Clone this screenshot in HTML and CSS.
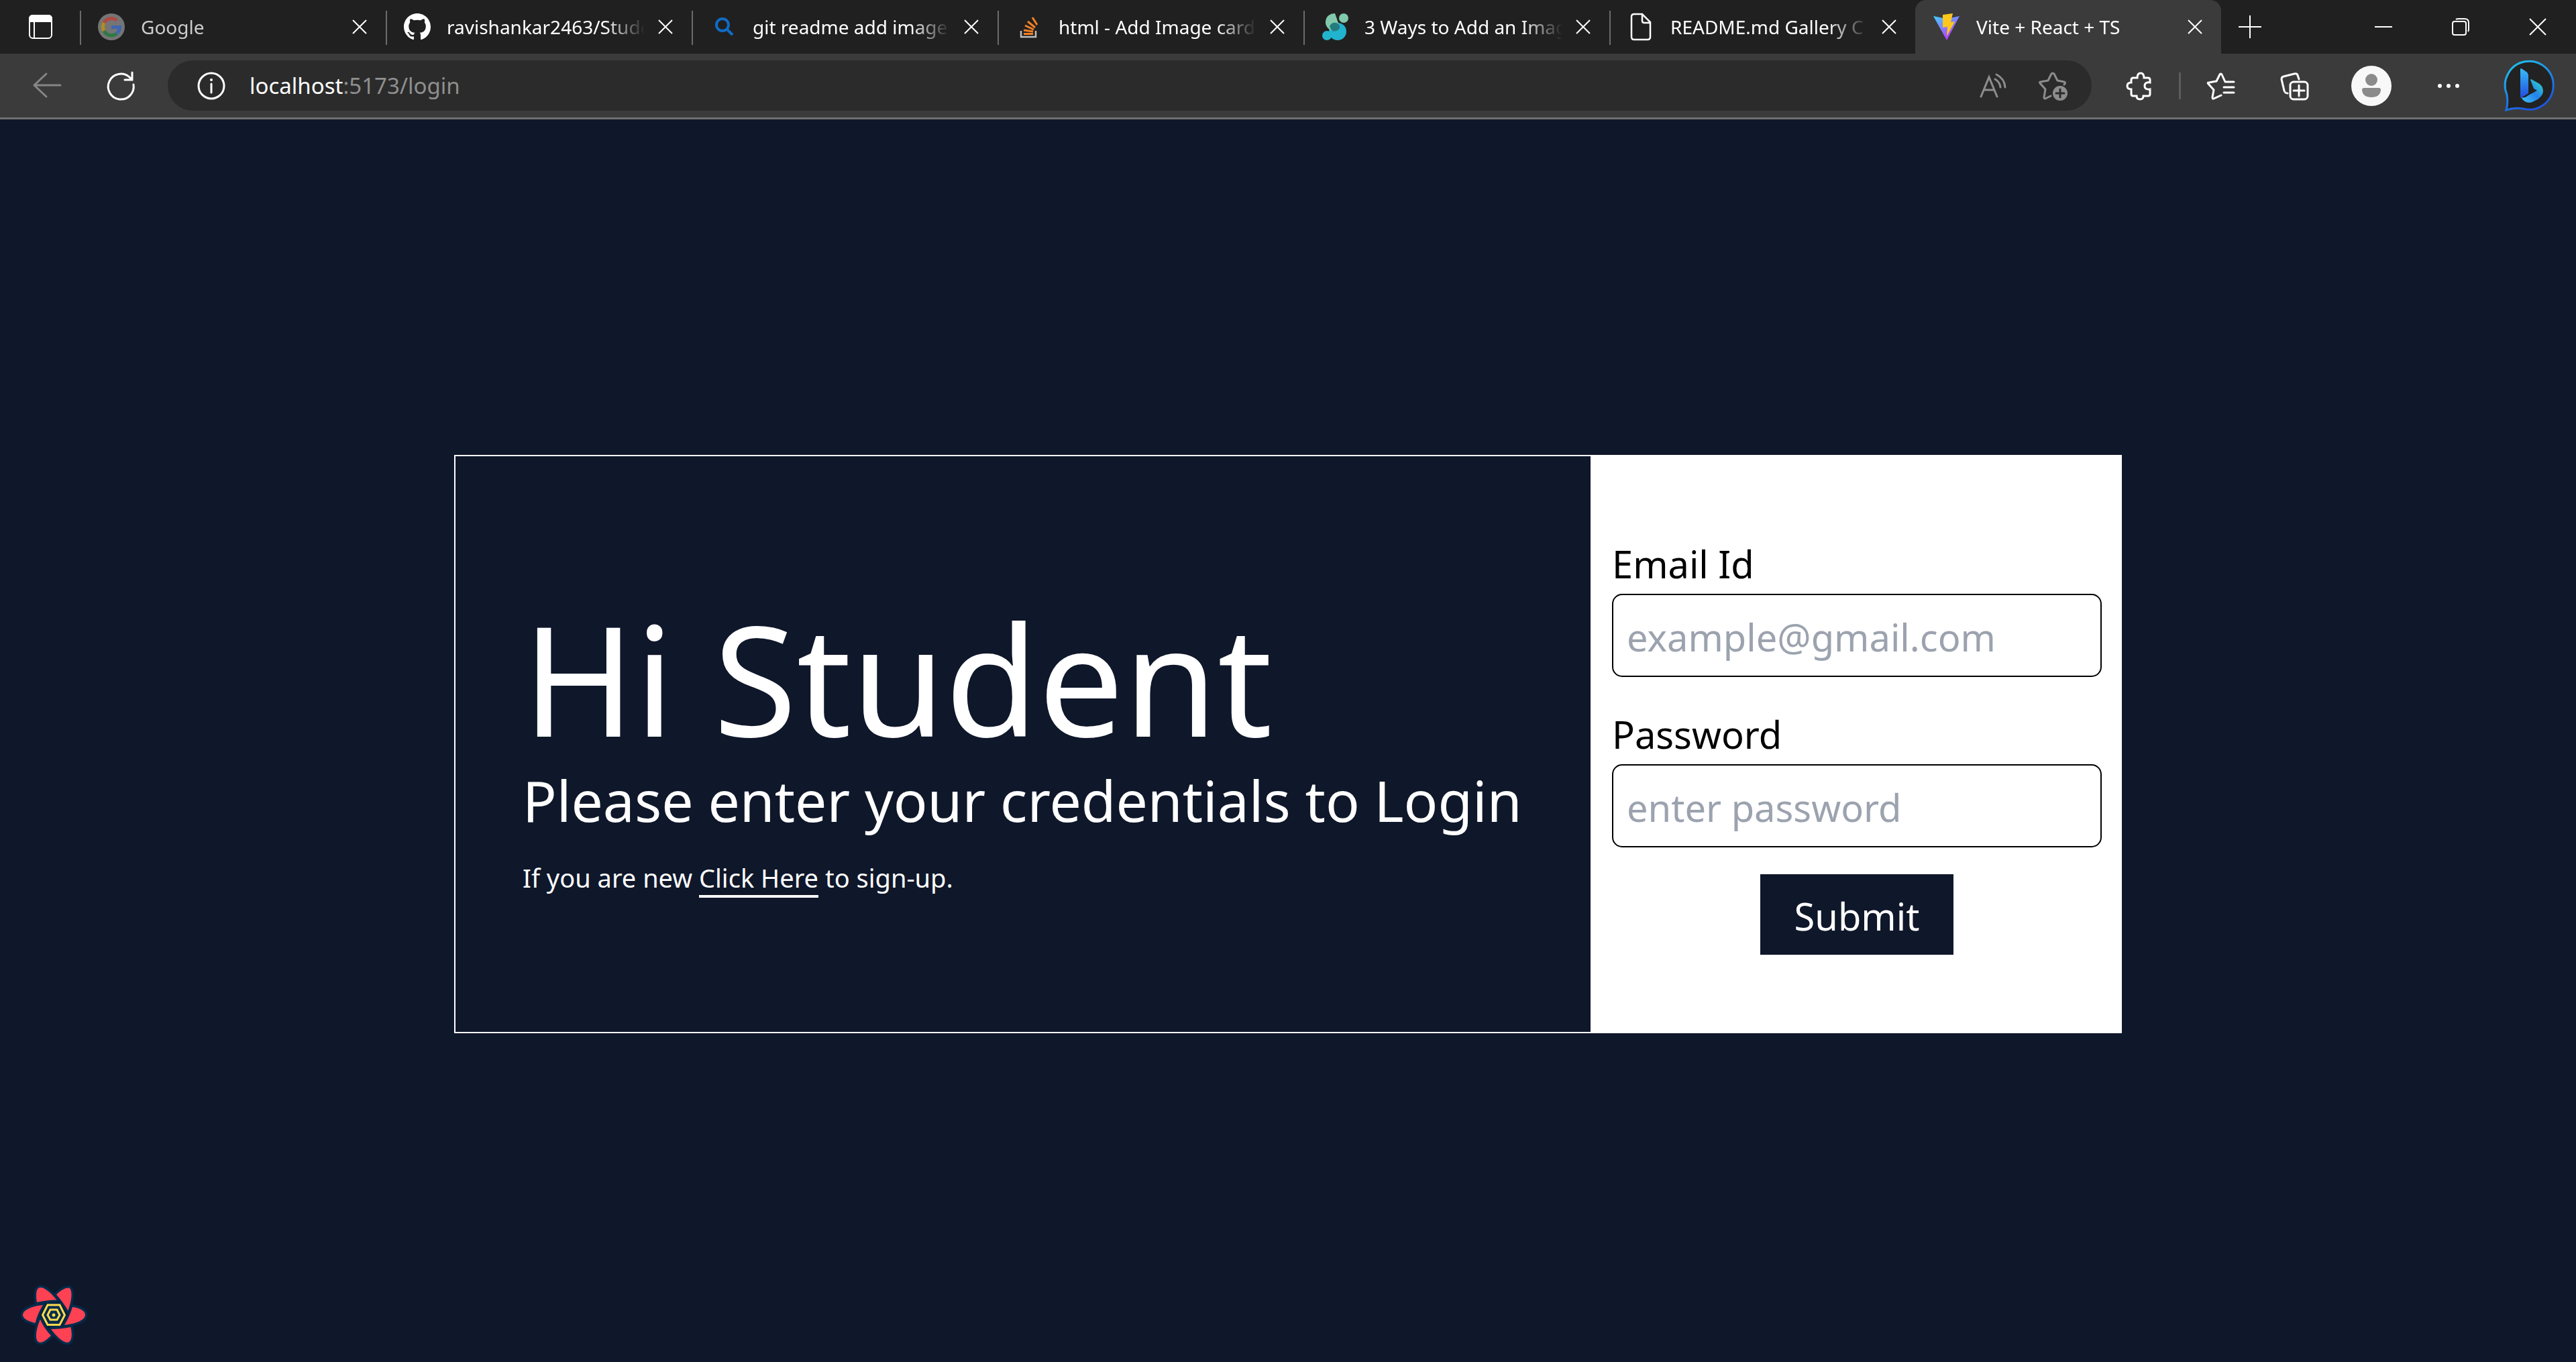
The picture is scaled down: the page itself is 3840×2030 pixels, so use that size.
FILE: index.html
```html
<!DOCTYPE html>
<html lang="en">
<head>
<meta charset="utf-8">
<title>Vite + React + TS</title>
<link rel="stylesheet" href="styles.css">
</head>
<body>
<header class="browser">
  <div class="tabstrip">
    <button class="tab-actions" aria-label="Tab actions"><svg width="40" height="76" viewBox="0 0 40 76"><rect x="4" y="23" width="33" height="34" rx="5" fill="none" stroke="#fff" stroke-width="2"/><path d="M4 32v-4q0-5 5-5h23q5 0 5 5v4zM11 32v25" fill="#fff" stroke="#fff" stroke-width="2"/></svg></button>
    <div class="tab">
      <svg class="fav" viewBox="0 0 40 40"><circle cx="20" cy="20" r="20" fill="#757575"/><g fill="none" stroke-width="5"><path d="M9 14A12.500 12.500 0 0 1 28 10.500" stroke="#b04a44"/><path d="M9 26A12.500 12.500 0 0 1 9 14" stroke="#b08c20"/><path d="M28 30A12.500 12.500 0 0 1 9 26" stroke="#2f7a45"/><path d="M20 20.500H32.500Q32.500 26 28 30" stroke="#3f66b0"/></g></svg>
      <span class="tab-title tab-title-dim">Google</span>
      <button class="close" aria-label="Close tab"><svg viewBox="0 0 22 22"><path d="M1 1L21 21M21 1L1 21"/></svg></button>
    </div>
    <div class="tab">
      <svg class="fav" viewBox="0 0 16 16"><path fill="#fff" d="M8 0C3.580 0 0 3.580 0 8c0 3.540 2.290 6.530 5.470 7.590.4.070.55-.170.55-.380 0-.190-.010-.820-.010-1.490-2.010.370-2.530-.490-2.690-.940-.090-.230-.480-.940-.820-1.130-.280-.150-.680-.520-.010-.530.630-.010 1.080.580 1.230.820.720 1.210 1.870.870 2.330.660.070-.520.280-.870.510-1.070-1.780-.2-3.640-.890-3.640-3.950 0-.870.310-1.590.820-2.150-.080-.2-.360-1.020.080-2.120 0 0 .670-.210 2.200.820.640-.180 1.320-.270 2-.270s1.360.090 2 .270c1.530-1.040 2.200-.820 2.200-.820.440 1.100.160 1.920.080 2.120.510.560.820 1.270.820 2.150 0 3.070-1.870 3.750-3.650 3.950.290.250.540.730.540 1.480 0 1.070-.010 1.930-.010 2.200 0 .210.150.460.550.380A8.010 8.010 0 0 0 16 8c0-4.420-3.580-8-8-8z"/></svg>
      <span class="tab-title">ravishankar2463/Stude</span>
      <button class="close" aria-label="Close tab"><svg viewBox="0 0 22 22"><path d="M1 1L21 21M21 1L1 21"/></svg></button>
    </div>
    <div class="tab">
      <svg class="fav" viewBox="0 0 40 40"><g fill="none" stroke="#0f6cc4" stroke-width="4"><circle cx="19" cy="17" r="9"/><path d="M25 23L34 32"/></g></svg>
      <span class="tab-title">git readme add image</span>
      <button class="close" aria-label="Close tab"><svg viewBox="0 0 22 22"><path d="M1 1L21 21M21 1L1 21"/></svg></button>
    </div>
    <div class="tab">
      <svg class="fav" viewBox="0 0 40 40"><path d="M8 26v9h22v-9" fill="none" stroke="#bcbec0" stroke-width="2.500"/><g stroke="#f48024" stroke-width="3" fill="none"><path d="M12 30.500h14M12 25l14 2M14 18l13 6M18 12l11 9M25 6l7 11"/></g></svg>
      <span class="tab-title">html - Add Image card</span>
      <button class="close" aria-label="Close tab"><svg viewBox="0 0 22 22"><path d="M1 1L21 21M21 1L1 21"/></svg></button>
    </div>
    <div class="tab">
      <svg class="fav" viewBox="0 0 40 40"><circle cx="24" cy="27" r="13" fill="#22b3cf"/><path d="M20 0A13 13 0 1 0 18 26Q28 26 26 17Z" fill="#82c9ac"/><path d="M12 19Q15 13 22 14Q28 16 27 22Q23 28 16 26Q13 23 12 19Z" fill="#247c7e"/><circle cx="33" cy="7" r="7" fill="#82c9ac"/><circle cx="8" cy="33" r="7" fill="#22b3cf"/></svg>
      <span class="tab-title">3 Ways to Add an Imag</span>
      <button class="close" aria-label="Close tab"><svg viewBox="0 0 22 22"><path d="M1 1L21 21M21 1L1 21"/></svg></button>
    </div>
    <div class="tab">
      <svg class="fav" viewBox="0 0 40 40"><path d="M10 1h12l12 12v22q0 4-4 4H10q-4 0-4-4V5q0-4 4-4zM22 1v10q0 3 3 3h9" fill="none" stroke="#fff" stroke-width="2.500"/></svg>
      <span class="tab-title">README.md Gallery C</span>
      <button class="close" aria-label="Close tab"><svg viewBox="0 0 22 22"><path d="M1 1L21 21M21 1L1 21"/></svg></button>
    </div>
    <div class="tab active">
      <svg class="fav" viewBox="0 0 40 40"><defs><linearGradient id="vite" x1="0" y1="0" x2=".6" y2="1"><stop stop-color="#41d1ff"/><stop offset="1" stop-color="#bd34fe"/></linearGradient></defs><path d="M0 4L20 8L39 4L20 40Z" fill="url(#vite)"/><path d="M14 2L29 0L26 13L32 12L20 34L21 20L14 21Z" fill="#ffc61c"/></svg>
      <span class="tab-title">Vite + React + TS</span>
      <button class="close" aria-label="Close tab"><svg viewBox="0 0 22 22"><path d="M1 1L21 21M21 1L1 21"/></svg></button>
    </div>
    <button class="newtab" aria-label="New tab"><svg width="36" height="36" viewBox="0 0 36 36"><path d="M1 18H35M18 1V35"/></svg></button>
    <div class="window-controls">
      <button aria-label="Minimize"><svg width="26" height="26" viewBox="0 0 26 26"><path d="M0 13H26"/></svg></button>
      <button aria-label="Restore"><svg width="26" height="26" viewBox="0 0 26 26"><rect x="1" y="5" width="20" height="20" rx="3"/><path d="M6 2Q7 1 10 1H19Q25 1 25 7V16Q25 19 24 20"/></svg></button>
      <button aria-label="Close"><svg width="26" height="26" viewBox="0 0 26 26"><path d="M1 1L25 25M25 1L1 25"/></svg></button>
    </div>
  </div>
  <div class="toolbar">
    <button class="tool back" aria-label="Back"><svg width="42" height="42" viewBox="0 0 42 42"><path d="M41 20H2M20 3L2 20L20 37"/></svg></button>
    <button class="tool reload" aria-label="Reload"><svg width="42" height="42" viewBox="0 0 42 42"><path d="M40 19A19 19 0 1 1 34 8L38 12M38 1V12H27"/></svg></button>
    <div class="omnibox">
      <svg class="info" width="42" height="42" viewBox="0 0 42 42"><circle cx="21" cy="21" r="19"/><path d="M21 18V31"/><circle class="dot" cx="21" cy="12" r="2"/></svg>
      <span class="url"><span class="host">localhost</span>:5173/login</span>
      <button class="tool dim read" aria-label="Read aloud"><svg width="42" height="42" viewBox="0 0 42 42"><path d="M3 37L15 8L27 37M8 27H22M24 11Q31 15 32 23M26 4Q38 10 39 23"/></svg></button>
      <button class="tool dim" aria-label="Add to favorites"><svg width="44" height="44" viewBox="0 0 44 44"><path d="M19 37L11 41Q9 41 9 39L11 27L3 18Q2 16 4 16L15 14L20 4Q22 2 24 4L29 14L39 16Q42 17 39 20" stroke-linejoin="round"/><circle cx="33" cy="33" r="11" fill="#8d8d8d" stroke="none"/><path d="M27 33H39M33 27V39" stroke="#2b2b2b"/></svg></button>
    </div>
    <button class="tool ext" aria-label="Extensions"><svg width="42" height="42" viewBox="0 0 42 42"><path d="M9 12Q9 9 12 9H18Q18 2 23 2Q28 2 28 9H34Q37 9 37 12V16Q29 15 29 21Q29 27 37 26V33Q37 36 34 36H27Q27 41 22 41Q17 41 17 36H12Q9 36 9 33V26Q3 26 3 21Q3 16 9 16Z"/></svg></button>
    <span class="sep"></span>
    <button class="tool fav-list" aria-label="Favorites"><svg width="42" height="42" viewBox="0 0 42 42"><path d="M22 35L11 40Q9 41 9 38L11 27L3 18Q1 16 4 16L15 14L20 4Q21 2 23 4L28 15H41M26 23H41M26 31H41" stroke-linejoin="round"/></svg></button>
    <button class="tool coll" aria-label="Collections"><svg width="42" height="42" viewBox="0 0 42 42"><rect x="15" y="15" width="26" height="26" rx="5"/><path d="M28 20V36M20 28H36M11 32Q7 32 6 28L2 11Q2 8 5 7L21 3Q25 2 26 5L28 11"/></svg></button>
    <button class="tool profile" aria-label="Profile"><svg width="60" height="60" viewBox="0 0 60 60"><circle cx="30" cy="30" r="30" fill="#f8f8f8"/><circle cx="30" cy="21" r="9" fill="#8b8b8b"/><path d="M19 33H41Q44 33 44 36Q43 47 30 47Q17 47 16 36Q16 33 19 33Z" fill="#8b8b8b"/></svg></button>
    <button class="tool more" aria-label="Settings and more"><svg width="34" height="8" viewBox="0 0 34 8"><circle cx="4" cy="4" r="3"/><circle cx="17" cy="4" r="3"/><circle cx="30" cy="4" r="3"/></svg></button>
    <button class="tool bing" aria-label="Bing chat"><svg width="76" height="80" viewBox="0 0 76 80"><defs><linearGradient id="bub" x1="0" y1="0" x2=".5" y2="1"><stop stop-color="#1ec9ee"/><stop offset="1" stop-color="#1d57e0"/></linearGradient><linearGradient id="bb" x1="0" y1="0" x2="0" y2="1"><stop stop-color="#37bdf8"/><stop offset="1" stop-color="#214be0"/></linearGradient><linearGradient id="bc" x1="1" y1="0" x2="0" y2="1"><stop stop-color="#2ee0c0"/><stop offset=".5" stop-color="#2482ea"/><stop offset="1" stop-color="#3fc4fa"/></linearGradient></defs><path class="bubble" d="M2 76Q5 66 3 53A36 36 0 1 1 27 74Q14 72 2 76Z"/><path d="M23 15Q23 13 26 15L32 19Q35 21 35 24V51L24 58Q23 57 23 54Z" fill="url(#bb)"/><path d="M38 31Q38 29 41 31L50 36Q57 40 57 48Q57 54 49 60L41 64Q31 68 24 57Q29 59 35 54L48 47L43 44Z" fill="url(#bc)"/></svg></button>
  </div>
</header>
<main class="page">
  <section class="card">
    <div class="intro">
      <h1>Hi Student</h1>
      <p class="lead">Please enter your credentials to Login</p>
      <p class="hint">If you are new <a href="#signup">Click Here</a> to sign-up.</p>
    </div>
    <form class="login">
      <label for="email">Email Id</label>
      <input id="email" type="email" placeholder="example@gmail.com">
      <label for="password">Password</label>
      <input id="password" type="password" placeholder="enter password">
      <button type="submit">Submit</button>
    </form>
  </section>
  <button class="devtools" aria-label="Open React Query Devtools"><svg width="100" height="92" viewBox="0 0 100 92"><defs><g id="petals"><path d="M25 25C23 14 24 5 28 3.500C35 1 45 10 54.500 21.500C44 21.500 35 23 25 25Z"/><path d="M54 13.500C62 6 68 3 73 3.500C78 6 78 20 71.500 37.500C66 28 60 20 54 13.500Z"/><path d="M78 32C90 34 97 38 97 43.500C97 52 82 57 66 59C71 51 75 42 78 32Z"/><path d="M75.500 62C78 74 77 82 72.500 84.500C66 87 55 77 46 65C56 65 66 64 75.500 62Z"/><path d="M30 50.500C24 64 21 81 28 84.500C33 86 39 82 46 74.500C39 67 34 60 30 50.500Z"/><path d="M34 29C16 31 4 37 4 44C4 49 11 53 22.500 56C25 46 29 37 34 29Z"/></g></defs><use href="#petals" fill="none" stroke="#002c4b" stroke-width="7" stroke-linejoin="round"/><use href="#petals" fill="#ff4154"/><path d="M40 26H60L69 44L60 61H40L31 44Z" fill="#002c4b"/><g fill="none" stroke="#ffd94c" stroke-width="3"><path d="M41 29H59L66.500 44L59 58.500H41L33.500 44Z"/><path d="M45 36H55L59 44L55 51H45L41 44Z"/></g><circle cx="50" cy="44" r="2.500" fill="#ffd94c"/></svg></button>
</main>
</body>
</html>
```
FILE: styles.css
```css
* { box-sizing: border-box; }
body {
  margin: 0;
  min-height: 100vh;
  display: flex;
  flex-direction: column;
  font-family: "Noto Sans", "Open Sans", sans-serif;
  background: #0f172a;
  color: #fff;
}
button {
  border: 0;
  padding: 0;
  background: none;
  color: inherit;
  font: inherit;
  display: flex;
  align-items: center;
  justify-content: center;
}
svg { display: block; flex: none; overflow: visible; }
.tabstrip {
  display: flex;
  height: 80px;
  background: #202020;
}
.tab-actions { width: 119px; padding-bottom: 4px; }
.tab {
  width: 456px;
  min-width: 0;
  display: flex;
  align-items: center;
  padding: 0 14px 0 27px;
  background: linear-gradient(#6b6b6b, #6b6b6b) 0 16px / 2px 51px no-repeat;
}
.tab.active {
  background: #3b3b3b;
  border-radius: 16px 16px 0 0;
}
.fav { width: 40px; height: 40px; margin-right: 24px; }
.tab-title {
  flex: 1;
  min-width: 0;
  margin-right: 6px;
  overflow: hidden;
  white-space: nowrap;
  font-size: 28px;
  line-height: 40px;
  mask-image: linear-gradient(90deg, #000 calc(100% - 60px), transparent);
}
.tab-title-dim { color: #ccc; }
.close { width: 50px; height: 50px; }
.close svg { width: 22px; height: 22px; }
.close svg, .newtab svg, .window-controls svg {
  fill: none;
  stroke: #fff;
  stroke-width: 2;
}
.newtab { width: 86px; }
.window-controls {
  display: flex;
  margin-left: auto;
}
.window-controls button { width: 115px; }
.toolbar {
  display: flex;
  align-items: center;
  height: 98px;
  padding: 10px 30px 10px 49px;
  background: #3b3b3b;
  border-bottom: 3px solid #6f6f6f;
}
.tool svg, .info {
  fill: none;
  stroke: #fff;
  stroke-width: 3;
  stroke-linecap: round;
}
.back svg { stroke: #858585; }
.reload { margin: 0 49px 0 68px; }
.omnibox {
  flex: 1;
  display: flex;
  align-items: center;
  height: 75px;
  padding: 0 36px 0 44px;
  border-radius: 38px;
  background: #2b2b2b;
}
.info .dot { fill: #fff; stroke: none; }
.url {
  flex: 1;
  margin-left: 36px;
  font-size: 33px;
  line-height: 44px;
  color: #8f8f8f;
}
.host { color: #fff; }
.tool.dim svg { stroke: #8d8d8d; }
.read { margin-right: 46px; }
.ext { margin-left: 50px; }
.sep { width: 3px; height: 40px; margin: 0 38px; background: #5c5c5c; }
.coll { margin-left: 68px; }
.profile { margin-left: 64px; }
.tool.profile svg, .tool.bing svg { stroke: none; }
.bubble { fill: #222; stroke: url(#bub); stroke-width: 3px; }
.more { margin: 0 67px 0 68px; }
.tool.more svg { fill: #fff; stroke: none; }
.page {
  flex: 1;
  position: relative;
  display: flex;
  align-items: center;
  justify-content: center;
  padding-top: 10px;
}
.card {
  display: flex;
  width: 90%;
  max-width: 2486px;
  border: 2px solid #fff;
}
.intro {
  flex: 1;
  display: flex;
  flex-direction: column;
  justify-content: center;
  padding-left: 100px;
}
h1, p { margin: 0; font-weight: 400; }
h1 { font-size: 226px; line-height: 260px; }
.lead { font-size: 84px; line-height: 106px; }
.hint { margin-top: 32px; font-size: 38px; line-height: 60px; }
.hint a {
  color: inherit;
  text-decoration: none;
  border-bottom: 4px solid #fff;
}
.login {
  width: 790px;
  padding: 115px 28px 115px 32px;
  display: flex;
  flex-direction: column;
  background: #fff;
  color: #000;
  font-size: 56px;
  line-height: 90px;
}
.login input {
  height: 124px;
  margin-bottom: 40px;
  padding: 4px 20px 0;
  border: 2px solid #000;
  border-radius: 15px;
  background: #fff;
  font: inherit;
}
.login input::placeholder { color: #9ca3af; opacity: 1; }
.login button {
  align-self: center;
  width: 288px;
  height: 120px;
  padding-top: 4px;
  background: #0f172a;
  color: #fff;
}
.devtools {
  position: absolute;
  left: 30px;
  bottom: 22px;
}
```
